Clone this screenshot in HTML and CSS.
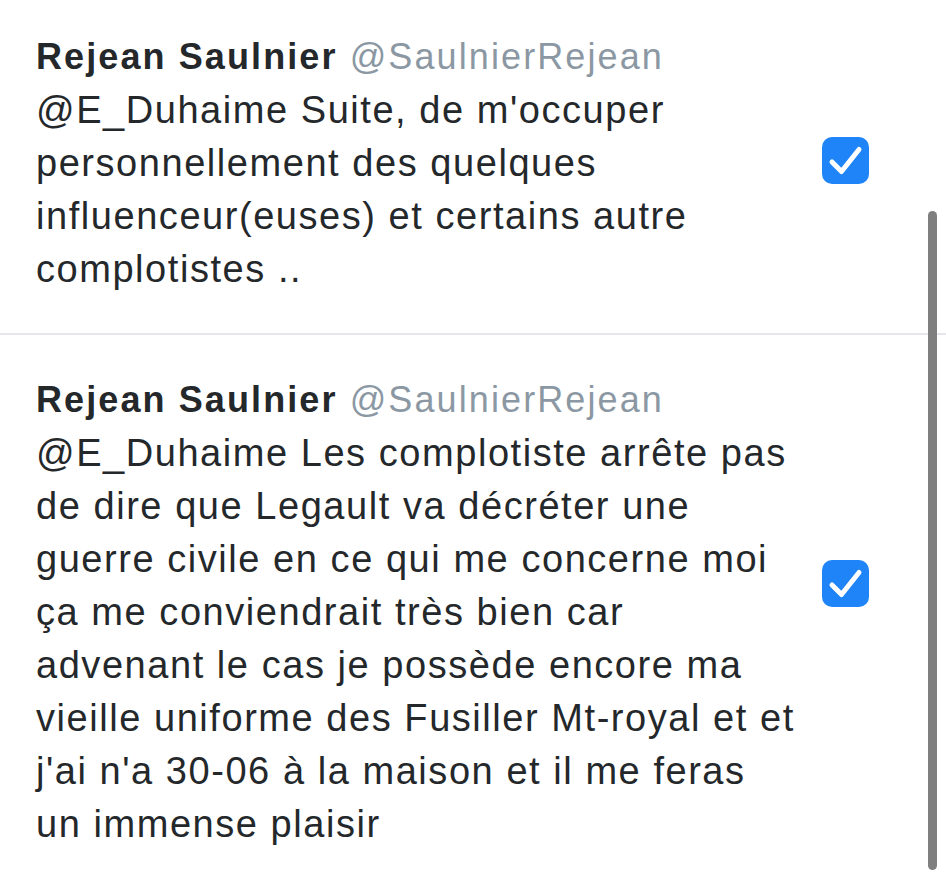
FILE: index.html
```html
<!DOCTYPE html>
<html lang="fr">
<head>
<meta charset="utf-8">
<title>Tweets</title>
<link rel="stylesheet" href="styles.css">
</head>
<body>
<div class="list">
  <div class="post post--first">
    <div class="content">
      <div class="head"><span class="name">Rejean Saulnier</span> <span class="handle">@SaulnierRejean</span></div>
      <div class="text">@E_Duhaime Suite, de m'occuper<br>personnellement des quelques<br>influenceur(euses) et certains autre<br>complotistes ..</div>
    </div>
    <div class="check check--a">
      <svg viewBox="0 0 47 47" width="47" height="47"><rect width="47" height="47" rx="10" fill="#1e84f8"/><path d="M10 25 L19.5 34.5 L37 12.5" fill="none" stroke="#fff" stroke-width="5" stroke-linecap="round" stroke-linejoin="round"/></svg>
    </div>
  </div>
  <div class="post">
    <div class="content">
      <div class="head"><span class="name">Rejean Saulnier</span> <span class="handle">@SaulnierRejean</span></div>
      <div class="text">@E_Duhaime Les complotiste arrête pas<br>de dire que Legault va décréter une<br>guerre civile en ce qui me concerne moi<br>ça me conviendrait très bien car<br>advenant le cas je possède encore ma<br>vieille uniforme des Fusiller Mt-royal et et<br>j'ai n'a 30-06 à la maison et il me feras<br>un immense plaisir</div>
    </div>
    <div class="check check--b">
      <svg viewBox="0 0 47 47" width="47" height="47"><rect width="47" height="47" rx="10" fill="#1e84f8"/><path d="M10 25 L19.5 34.5 L37 12.5" fill="none" stroke="#fff" stroke-width="5" stroke-linecap="round" stroke-linejoin="round"/></svg>
    </div>
  </div>
</div>
<div class="scrollbar"></div>
</body>
</html>
```

FILE: styles.css
```css
html, body {
  margin: 0;
  padding: 0;
  background: #ffffff;
}
body {
  font-family: "Liberation Sans", Arial, sans-serif;
  color: #24282b;
  width: 946px;
  height: 887px;
  overflow: hidden;
  position: relative;
}
.post {
  display: flex;
  align-items: flex-start;
  padding: 38px 77px 37px 36px;
  border-bottom: 2px solid #e4e6e9;
}
.post--first {
  padding-top: 30px;
}
.content {
  flex: 1;
  min-width: 0;
}
.head {
  font-size: 36px;
  line-height: 53px;
  letter-spacing: 2.1px;
  white-space: nowrap;
}
.name {
  font-weight: bold;
  color: #25282b;
}
.handle {
  color: #8b98a3;
}
.text {
  font-size: 38px;
  line-height: 53px;
  letter-spacing: 1.55px;
  margin-top: 1px;
  white-space: nowrap;
}
.check {
  width: 47px;
  height: 47px;
  flex: none;
}
.check svg {
  display: block;
}
.check--a {
  margin-top: 107px;
}
.check--b {
  margin-top: 187px;
}
.scrollbar {
  position: absolute;
  left: 928px;
  top: 211px;
  width: 9px;
  height: 659px;
  border-radius: 5px;
  background: #7f7f7f;
}
```
